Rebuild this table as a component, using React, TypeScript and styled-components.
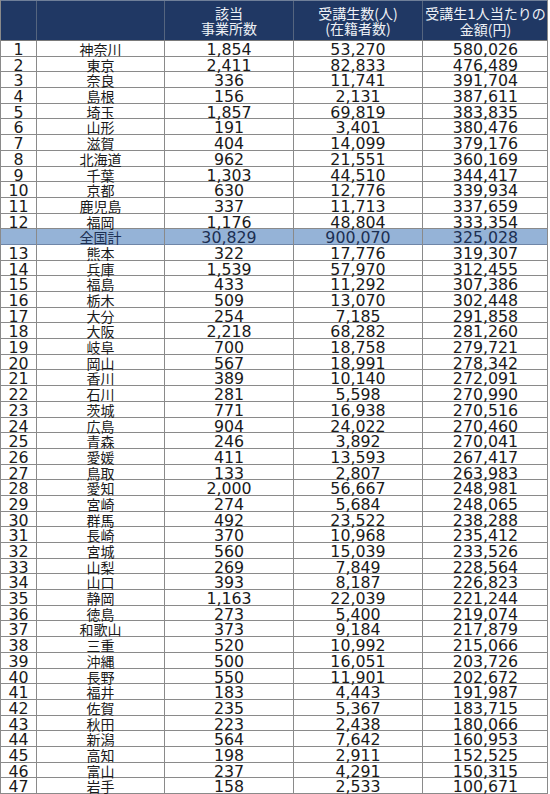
import React from 'react';
import styled, { createGlobalStyle } from 'styled-components';

const GlobalStyle = createGlobalStyle`
  html, body {
    margin: 0;
    padding: 0;
    background: #ffffff;
  }
  body {
    font-family: "DejaVu Sans", "Noto Sans CJK JP", sans-serif;
  }
`;

const COLS = '36px 128px 129px 129px 125px';

const Table = styled.div`
  width: 548px;
  border-left: 1px solid #8a8a8a;
  border-right: 1px solid #8a8a8a;
  box-sizing: border-box;
`;

const HeadRow = styled.div`
  display: grid;
  grid-template-columns: ${COLS};
  height: 41px;
  box-sizing: border-box;
  background: #203864;
  border-top: 1px solid #6f7f99;
  border-bottom: 1px solid #7a7a7a;
`;

const HeadCell = styled.div`
  display: flex;
  flex-direction: column;
  align-items: center;
  justify-content: center;
  border-right: 1px solid #55657f;
  color: #eef1f6;
  font-family: "Noto Sans CJK JP", sans-serif;
  font-size: 14px;
  line-height: 15px;
  padding-top: 1px;
  &:last-child {
    border-right: none;
  }
`;

const Digit = styled.span`
  font-family: "DejaVu Sans", sans-serif;
  font-size: 13.5px;
`;

const Row = styled.div<{ $total?: boolean }>`
  display: grid;
  grid-template-columns: ${COLS};
  height: 15.7px;
  box-sizing: border-box;
  border-bottom: 1px solid ${(p) => (p.$total ? '#6f86a8' : '#8a8a8a')};
  background: ${(p) => (p.$total ? '#95b3d7' : '#ffffff')};
  color: ${(p) => (p.$total ? '#1c2f52' : '#1a1a1a')};
`;

const Cell = styled.div<{ $name?: boolean }>`
  display: flex;
  align-items: center;
  justify-content: center;
  overflow: visible;
  white-space: nowrap;
  border-right: 1px solid #8a8a8a;
  font-family: ${(p) =>
    p.$name ? '"Noto Sans CJK JP", sans-serif' : '"DejaVu Sans", sans-serif'};
  font-size: ${(p) => (p.$name ? '14px' : '15.8px')};
  line-height: 15px;
  padding-top: 1px;
  &:last-child {
    border-right: none;
  }
`;

type Item = [string, string, string, string, string];

const rows: Item[] = [
  ['1', '神奈川', '1,854', '53,270', '580,026'],
  ['2', '東京', '2,411', '82,833', '476,489'],
  ['3', '奈良', '336', '11,741', '391,704'],
  ['4', '島根', '156', '2,131', '387,611'],
  ['5', '埼玉', '1,857', '69,819', '383,835'],
  ['6', '山形', '191', '3,401', '380,476'],
  ['7', '滋賀', '404', '14,099', '379,176'],
  ['8', '北海道', '962', '21,551', '360,169'],
  ['9', '千葉', '1,303', '44,510', '344,417'],
  ['10', '京都', '630', '12,776', '339,934'],
  ['11', '鹿児島', '337', '11,713', '337,659'],
  ['12', '福岡', '1,176', '48,804', '333,354'],
  ['', '全国計', '30,829', '900,070', '325,028'],
  ['13', '熊本', '322', '17,776', '319,307'],
  ['14', '兵庫', '1,539', '57,970', '312,455'],
  ['15', '福島', '433', '11,292', '307,386'],
  ['16', '栃木', '509', '13,070', '302,448'],
  ['17', '大分', '254', '7,185', '291,858'],
  ['18', '大阪', '2,218', '68,282', '281,260'],
  ['19', '岐阜', '700', '18,758', '279,721'],
  ['20', '岡山', '567', '18,991', '278,342'],
  ['21', '香川', '389', '10,140', '272,091'],
  ['22', '石川', '281', '5,598', '270,990'],
  ['23', '茨城', '771', '16,938', '270,516'],
  ['24', '広島', '904', '24,022', '270,460'],
  ['25', '青森', '246', '3,892', '270,041'],
  ['26', '愛媛', '411', '13,593', '267,417'],
  ['27', '鳥取', '133', '2,807', '263,983'],
  ['28', '愛知', '2,000', '56,667', '248,981'],
  ['29', '宮崎', '274', '5,684', '248,065'],
  ['30', '群馬', '492', '23,522', '238,288'],
  ['31', '長崎', '370', '10,968', '235,412'],
  ['32', '宮城', '560', '15,039', '233,526'],
  ['33', '山梨', '269', '7,849', '228,564'],
  ['34', '山口', '393', '8,187', '226,823'],
  ['35', '静岡', '1,163', '22,039', '221,244'],
  ['36', '徳島', '273', '5,400', '219,074'],
  ['37', '和歌山', '373', '9,184', '217,879'],
  ['38', '三重', '520', '10,992', '215,066'],
  ['39', '沖縄', '500', '16,051', '203,726'],
  ['40', '長野', '550', '11,901', '202,672'],
  ['41', '福井', '183', '4,443', '191,987'],
  ['42', '佐賀', '235', '5,367', '183,715'],
  ['43', '秋田', '223', '2,438', '180,066'],
  ['44', '新潟', '564', '7,642', '160,953'],
  ['45', '高知', '198', '2,911', '152,525'],
  ['46', '富山', '237', '4,291', '150,315'],
  ['47', '岩手', '158', '2,533', '100,671'],
];

const App: React.FC = () => {
  return (
    <>
      <GlobalStyle />
      <Table>
        <HeadRow>
          <HeadCell />
          <HeadCell />
          <HeadCell>
            <span>該当</span>
            <span>事業所数</span>
          </HeadCell>
          <HeadCell>
            <span>受講生数(人)</span>
            <span>(在籍者数)</span>
          </HeadCell>
          <HeadCell>
            <span>
              受講生<Digit>1</Digit>人当たりの
            </span>
            <span>金額(円)</span>
          </HeadCell>
        </HeadRow>
        {rows.map(([rank, name, offices, students, amount]) => (
          <Row key={name} $total={rank === ''}>
            <Cell>{rank}</Cell>
            <Cell $name>{name}</Cell>
            <Cell>{offices}</Cell>
            <Cell>{students}</Cell>
            <Cell>{amount}</Cell>
          </Row>
        ))}
      </Table>
    </>
  );
};

export default App;
